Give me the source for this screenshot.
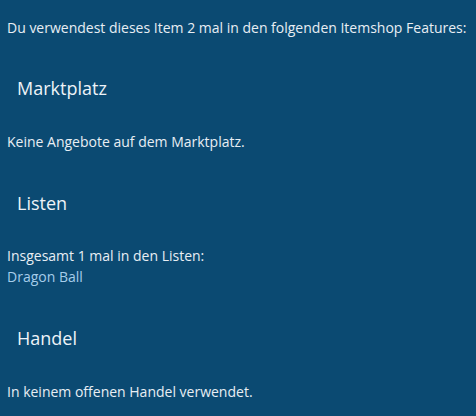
const sections = [
  { title: "Marktplatz", lines: ["Keine Angebote auf dem Marktplatz."], gap: "mt-[37px] mb-[30px]" },
  { title: "Listen", lines: ["Insgesamt 1 mal in den Listen:"], link: "Dragon Ball", gap: "mt-[38px] mb-[29px]" },
  { title: "Handel", lines: ["In keinem offenen Handel verwendet."], gap: "mt-[38px] mb-[30px]" },
];

export default function App() {
  return (
    <div
      className="h-[416px] w-[476px] overflow-hidden bg-[#0b4a72] px-[7px] pt-[17px] text-[14px] leading-[21px] text-[#e8eef4]"
      style={{ fontFamily: '"Open Sans", "Liberation Sans", sans-serif' }}
    >
      <p>Du verwendest dieses Item 2 mal in den folgenden Itemshop Features:</p>
      {sections.map((s) => (
        <div key={s.title}>
          <h2 className={`${s.gap} pl-[10px] text-[18px] leading-[26px] text-[#eef3f8]`}>
            {s.title}
          </h2>
          {s.lines.map((l) => (
            <p key={l}>{l}</p>
          ))}
          {s.link && <a className="block text-[#a6cdea]">{s.link}</a>}
        </div>
      ))}
    </div>
  );
}
